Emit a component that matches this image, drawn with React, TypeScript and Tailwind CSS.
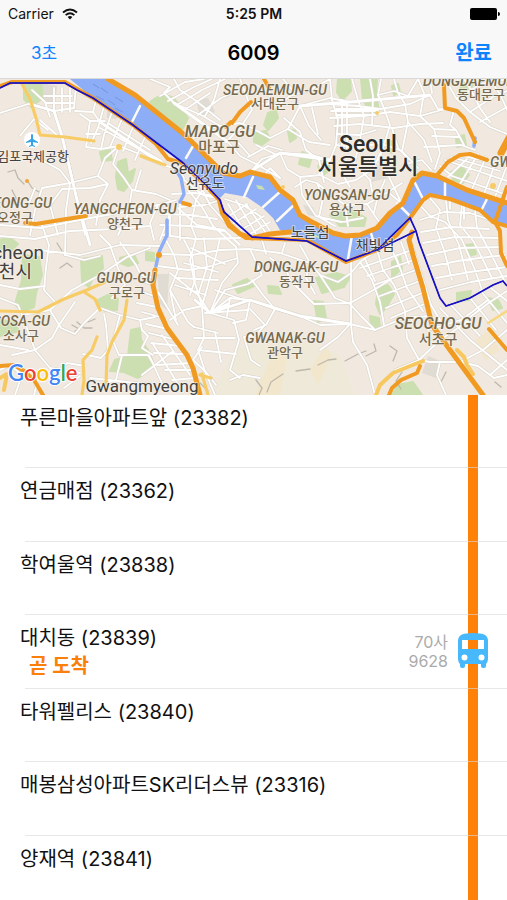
import React from "react";

type Stop = {
  name: string;
  id: string;
  arrival?: string;
  bus?: { left: string; plate: string };
};

const stops: Stop[] = [
  { name: "푸른마을아파트앞", id: "23382" },
  { name: "연금매점", id: "23362" },
  { name: "학여울역", id: "23838" },
  { name: "대치동", id: "23839", arrival: "곧 도착", bus: { left: "70사", plate: "9628" } },
  { name: "타워펠리스", id: "23840" },
  { name: "매봉삼성아파트SK리더스뷰", id: "23316" },
  { name: "양재역", id: "23841" },
];

const parks = [
  "M150 102 Q162 92 174 98 L188 118 L182 130 L160 112Z",
  "M338 79h12l1 12-9 9-5-8Z",
  "M361 79h16l-1 16 3 16-8 2-8-13Z",
  "M268 113l8-3 2 8-10 12-4-5Z",
  "M288 131l7-1 1 8-6 4Z",
  "M254 133l12-2 4 8-8 6-8-3Z",
  "M330 215l22-5 14 8-2 8-24 0Z",
  "M302 152l10 4-3 11-10-3Z",
  "M118 162l8-3 2 14 7-4-3 12-8 10-6-2-2-12Z",
  "M100 152l10-2 2 10-10 1Z",
  "M23 255l16 2 3 18-6 18-2 14-12 5-7-8 7-24Z",
  "M81 259l21-3 1 12-9 8-5 11-7-5Z",
  "M98 300l12-6 8 5-1 11-12 1-7-5Z",
  "M120 258l14-4 4 9-10 3-8-3Z",
  "M146 252l8 1 0 8-8-1Z",
  "M131 330l9-2 1 12 7 10 5 12-6 10-9 6-14-6-14-1 5-11 13-4Z",
  "M316 278l20-5 14 4-6 10-22 6Z",
  "M378 288l10-3 6 9-8 14-6 6-4-10Z",
  "M314 301l9 1 3 16-8 4Z",
  "M370 316l9 2 1 9-9 1Z",
  "M398 385l15-3 9 13h-30Z",
  "M457 293l14-2-2 9-12 1Z",
  "M488 298l10 2 4 8-9 2Z",
  "M451 172l11-5 7 8-6 8-10-3Z",
  "M456 138l8-3 2 10-9 2Z",
  "M0 240l8-4 10 8-7 7-11-3Z",
  "M268 286l10 1 3 7-12-1Z",
  "M24 84l17-2 2 16-12 9-7-8Z",
  "M466 245l8-1 2 10-8 2Z",
  "M392 262l8-5 2 12-10 8Z",
  "M0 320l14 2 5 9-19 5Z",
  "M464 79l9 6-8 12-5-8Z",
  "M318 166l10-4 2 8-8 6Z",
  "M386 143l10-3 3 8-8 5Z",
  "M392 86l6-2 2 8-6 3Z",
  "M233 285l14-6 7 7-16 7Z",
];

const blocks = [
  "M157 274h12l-2 36-7-6Z",
  "M303 205l10 2 4 10-9-2Z",
  "M335 107h8v36h-8Z",
  "M107 103l12 2-2 14-10-1Z",
  "M196 100l12-2 7 14-15 5Z",
  "M372 165l14 1 1 12-15 4Z",
  "M40 83l17 3-2 20-12-5Z",
  "M428 356l14 6-6 16-14-5Z",
];

const streets = [
  // West
  "M0 113L28 104L54 111L74 108L76 86M54 111L62 136L70 168L77 200L85 235M32 90L45 102L50 117M40 120L58 136M20 136L34 119L48 130M44 96H72M46 103H74M54 88V112M62 88V112M70 88V112",
  "M65 83L80 93L96 100L93 112L75 111M93 112L100 122L135 146L160 160L165 165M104 106L98 128L91 143M112 112L104 135L101 149M122 119L110 147M133 127L123 151M145 137L135 160M80 114L90 121L86 147L101 149L119 146L137 153M100 128L154 157M108 123L150 150M90 121H105M86 134H100",
  "M141 156L165 166L178 168L184 178M119 146L113 164L124 178L132 190L128 214L118 235M119 146L105 158L98 176L70 183L42 188L35 210L30 235M42 160L60 170L70 183M98 176L108 184L90 188L62 189L50 205L58 235M108 184L100 200L96 225",
  "M0 225L40 228L60 224L90 218L130 211L158 205L176 200M0 236L35 239L70 231L115 229L150 226M70 183L66 210L65 255M158 205L150 223L154 240M132 190L156 194L170 200M141 170L135 190M35 188L28 206",
  "M40 250L80 255L120 245L160 246M42 225L49 245L46 268L44 290L55 302M65 255L84 260L100 256M100 235L110 245L118 268L125 285L112 298M120 242L136 265L141 275L154 278M0 285L20 289L45 286M0 298L18 305L22 315L50 310L72 290L100 275L127 257L150 248",
  "M22 315L35 350L50 368L80 373M35 350L52 338L59 325L75 302M50 310L61 328L75 334L85 322L100 308M104 314L106 325L108 350L101 358L83 354M100 308L120 315L140 320L155 317M120 315L113 341L119 355L148 355L154 365",
  "M140 320L142 330L148 336L142 348L153 355M137 303L157 307M142 292L157 297M145 282L155 285M142 312L164 318M146 324L168 329M149 333L173 339M151 343L180 346M154 353L183 354M157 365L190 363M165 370L193 370M172 380L196 378M153 344L183 392M162 335L190 375M149 355L165 390M142 375L172 352M90 378L155 385M122 355L116 380L86 390",
  "M0 370L10 365L22 375L15 395M56 375L67 363L85 366M12 355L35 350M40 372L34 395M0 345L28 350M64 388L80 376",
  // Seoul centre, north of the river
  "M150 79L170 87L164 93L174 103L203 116L220 126M174 79L180 90L195 100L220 120M160 96L185 82L204 79M168 101L194 87L212 79M177 105L202 90L225 79M186 109L210 93M198 115L221 98L240 90M220 79L214 100L205 116M190 140L214 127L240 123L252 128",
  "M240 79L246 95L252 110L240 128L226 142M228 142L240 156L258 165L280 178M250 172L262 159L280 153L312 155L330 160M252 128L270 138L288 129L300 106L330 98L350 102M258 103L278 106L290 96L310 90L330 79M262 79L270 93L268 105M283 79L294 92M330 79L332 100L338 120L336 145L330 160L319 174",
  "M352 79L358 100L364 116L360 140L354 165M330 118L364 116L390 112L420 116L445 109M330 104L358 106L380 109L410 104L430 95M331 111H378M334 126L360 124L394 128L420 124M336 145L358 148L380 143L402 151L418 168M337 134L360 135L376 130M381 79L378 95L384 108L390 125L384 145L379 160L388 175L400 200",
  "M342 100V150M347 103V150M336 109H378M336 115H376M378 95L394 91L408 96L418 79M394 79L398 93L405 104L408 122L402 151M418 79L424 93L420 116L434 129L456 130M408 122L424 140L432 162M370 79L373 96L372 125M392 128L398 148L408 159",
  "M284 118L300 132L306 150L319 160L324 182M288 129L309 142L330 145M300 106L309 126L321 140M280 153L287 169L300 177L320 175L338 184L356 180L373 169L384 145M295 187L306 180L317 183L330 194L345 205L367 204L388 192L402 183M317 183L323 198L319 217L335 226M300 177L302 195L316 216L341 222L363 218M345 205L348 226M367 204L375 216L380 223M385 180L378 196L374 212M388 192L400 202",
  "M263 177L270 168L280 178M256 145L275 154M248 157L268 146L282 150M236 140L250 156M312 108L318 134M356 165L370 180L373 196M340 170L350 187M406 164L422 160L431 170",
  // East
  "M430 95L438 109L454 110M430 79L432 93M445 79L456 98L470 112L490 127L507 134M464 79L470 88L480 108L490 122M458 98L481 84L507 79M470 112L493 97L507 91M480 122L507 107M490 79L501 96L507 110M454 110L450 125L456 130L464 145M420 124L443 123M432 136L458 137M434 129L440 153L435 169M424 147L461 145L475 150",
  "M440 166L452 176L507 195M445 160L507 181M451 157L500 171M458 155L504 164M448 177L467 159M460 184L478 154M472 189L486 157M484 194L496 161M495 197L506 168",
  "M419 204L430 216L445 222L462 240L475 270L482 290M430 198L440 210L436 228L444 250L452 280M446 200L448 220L459 245L468 280M462 205L460 225L474 242L492 278M475 210L477 228L490 252L505 282M420 220L444 212L470 213L487 219M421 232L452 227L489 229M423 243L455 237L498 238M427 255L460 248L502 247M432 266L463 260L505 255M436 278L470 272L507 267M440 290L471 282L507 276M450 199V209M464 204V219",
  "M412 245L431 305L440 320M428 330L470 317L490 302L507 291M480 290L507 323M470 298L496 330M440 308L470 340L507 370M450 304L480 336M491 288L507 301M460 321L488 300",
  // Yeouido and the south
  "M225 199L243 205L260 216L270 231M228 204L244 231M236 200L256 234M246 204L266 233M229 216L247 204M234 223L256 209M241 230L264 216M250 234L270 222",
  "M206 185L196 200L191 225L196 238L190 260L194 280L202 306L210 313M220 200L205 205L180 207M178 208L197 225L224 230L240 245M188 190L202 207L213 226L236 247M170 203L170 235M180 200L180 240M200 185L210 205L225 222M184 180L203 195L216 198M160 214L190 215L217 219M160 225L191 226L225 231M163 235L195 239L240 238M172 194L195 193L215 196M171 211L160 240",
  "M160 254L192 255L220 250L250 249L280 253L310 263L320 275M158 266L188 270L207 267L238 258M166 240L174 255L178 270M184 240L192 255L195 280L190 295M204 238L207 267L198 295M220 238L215 260L202 306M236 247L238 263L222 283L210 313M170 273L198 295L210 313M178 270L170 290L176 320M158 292L178 325M170 290L188 322L194 327M202 306L184 310L170 320M178 278L218 280M184 263L218 272M191 248L225 264M175 285L206 295",
  "M210 313L230 298L250 300L275 309L300 316L320 325L350 324L375 330L404 318L430 316M202 306L204 338L198 350L205 371L215 395M210 313L234 320L239 340L230 370L240 378M250 300L246 320L233 323M194 327L218 333M198 350L236 354M252 280L263 295L275 309L266 325L254 330M270 258L286 269L290 280L314 304L350 303L377 288L390 280",
  "M250 249L262 275L248 284L225 290L210 313M262 240L266 254M285 243L282 253M300 245L310 263L306 278L315 294M320 275L338 282L351 273L360 262L377 250M320 275L335 298L350 304L360 315L375 330M351 262V325L353 342L367 365L375 395M350 324L338 337L320 350M360 262L372 280L380 302L384 325M377 250L383 270L394 285L405 311M390 245L400 268L407 288L423 311M401 242L409 264M360 268L412 250M367 276L414 260M374 285L416 270M380 296L420 281M386 308L422 293M391 318L427 303M365 259L375 281M396 257L405 282",
  "M405 311L407 338L419 360L430 362L460 362L483 350L507 330M419 360L440 340L470 320M460 362L478 366L494 378L507 375M395 370L419 360M440 362L437 375L446 395M490 375L507 360M250 309L265 325L256 335L244 337L251 360L260 366M230 380L243 375L260 378",
  "M202 347L193 360L206 372L216 385M205 313L248 310M194 338H235M215 332L221 362M230 298L227 316M215 290L244 300",
];

const thickStreets =
  "M30 104L54 111L62 136L77 200L90 245M100 122L165 166M210 313L250 300L300 316L350 324M250 172L280 153L330 160M174 103L228 142M300 106L350 102L430 95M195 300L210 313L228 304";

const hills =
  "M8 172l7-2 3 8 6 6M27 180l5 8 7 4M12 190l4 8-2 6M57 243l5 8M60 268l7-5 5 4M72 325l7 4-4 2M77 322l7 6 8 0M88 322l7-3M318 365l10-5 8-1M296 371l14-2M345 361l13-7 8-3M366 356l10-5-2-7M390 346l7 5-4 10M402 372l-6 9 5 8M446 372l-5 10M495 382l6 5M283 374l-12 8-4 10M256 380l6 8-3 7M200 383l8 8";

const river =
  "M70 79L108 79L135 95L180 131L205 155L223 173L240 176L250 172L270 177L280 190L293 200L300 215L310 222L333 233L360 235L377 228L390 213L403 203L413 180L422 173L437 176L467 190L507 203L507 226L493 222L480 210L450 199L430 195L423 202L410 218L390 240L377 250L346 262L307 242L290 234L280 230L273 218L263 208L247 197L225 193L220 198L203 182L182 162L133 125L93 98Z";

const route =
  "M0 88L10 83L65 83L77 90L93 98L133 125L182 162L203 182L220 200L224 212L252 237L307 241L346 261L377 250L416 231M377 250L410 218L416 231L419 242L440 298L446 306L470 298L493 285L503 281L507 286";

type Label = {
  x: number;
  y: number;
  text: string;
  size: number;
  kind: "gu" | "ko" | "town";
  anchor?: "start" | "end";
};

const labels: Label[] = [
  { x: 275, y: 95, text: "SEODAEMUN-GU", size: 14, kind: "gu" },
  { x: 275, y: 108, text: "서대문구", size: 13, kind: "ko" },
  { x: 423, y: 86, text: "DONGDAEMUN-GU", size: 14, kind: "gu", anchor: "start" },
  { x: 481, y: 99, text: "동대문구", size: 13, kind: "ko" },
  { x: 220, y: 137, text: "MAPO-GU", size: 16, kind: "gu" },
  { x: 219, y: 152, text: "마포구", size: 15, kind: "ko" },
  { x: 490, y: 167, text: "GWANGJIN-GU", size: 14, kind: "gu", anchor: "start" },
  { x: 125, y: 214, text: "YANGCHEON-GU", size: 14, kind: "gu" },
  { x: 125, y: 228, text: "양천구", size: 13, kind: "ko" },
  { x: 347, y: 200, text: "YONGSAN-GU", size: 14, kind: "gu" },
  { x: 347, y: 214, text: "용산구", size: 13, kind: "ko" },
  { x: 52, y: 208, text: "OJEONG-GU", size: 14, kind: "gu", anchor: "end" },
  { x: 33, y: 222, text: "오정구", size: 13, kind: "ko", anchor: "end" },
  { x: 126, y: 283, text: "GURO-GU", size: 14, kind: "gu" },
  { x: 127, y: 297, text: "구로구", size: 13, kind: "ko" },
  { x: 296, y: 272, text: "DONGJAK-GU", size: 14, kind: "gu" },
  { x: 297, y: 286, text: "동작구", size: 13, kind: "ko" },
  { x: 50, y: 326, text: "SOSA-GU", size: 14, kind: "gu", anchor: "end" },
  { x: 21, y: 340, text: "소사구", size: 13, kind: "ko" },
  { x: 285, y: 343, text: "GWANAK-GU", size: 14, kind: "gu" },
  { x: 285, y: 357, text: "관악구", size: 13, kind: "ko" },
  { x: 438, y: 329, text: "SEOCHO-GU", size: 16, kind: "gu" },
  { x: 438, y: 344, text: "서초구", size: 14, kind: "ko" },
  { x: 69, y: 161, text: "김포국제공항", size: 13, kind: "town", anchor: "end" },
  { x: 205, y: 188, text: "선유도", size: 14, kind: "town" },
  { x: 310, y: 237, text: "노들섬", size: 14, kind: "town" },
  { x: 375, y: 250, text: "채빛섬", size: 14, kind: "town" },
  { x: 142, y: 392, text: "Gwangmyeong", size: 17, kind: "town" },
  { x: 44, y: 259, text: "Bucheon", size: 19, kind: "town", anchor: "end" },
  { x: 32, y: 278, text: "부천시", size: 18, kind: "town", anchor: "end" },
];

const labelClass = {
  gu: "fill-[#756a4f] font-medium italic",
  ko: "fill-[#756a4f] font-medium",
  town: "fill-[#40403e]",
};

function MapView() {
  return (
    <svg
      viewBox="0 79 507 316"
      preserveAspectRatio="xMidYMid slice"
      className="block h-[316px] w-full shrink-0 bg-[#f1ebe1] font-[Roboto,'Noto_Sans_CJK_KR',sans-serif]"
      role="img"
      aria-label="서울 지도"
    >
      <rect y="79" width="507" height="316" fill="#f1e9df" />
      <path d="M210 395L235 350L290 335L340 355L355 395Z" fill="#eee9d8" />
      <path d="M255 395L270 360L290 345L280 395ZM310 370L325 346L332 355L318 385ZM475 340L490 330L500 350L485 360Z" fill="#f2e7cc" />
      {blocks.map((d) => <path key={d} d={d} fill="#e0dbd3" />)}
      {parks.map((d) => <path key={d} d={d} fill="#cbdfb0" strokeLinejoin="round" stroke="#cbdfb0" strokeWidth="2" />)}

      <g fill="none" strokeLinejoin="round" strokeLinecap="round">
        <path d={hills} stroke="#bdb8ad" strokeWidth="1.3" />
        {streets.map((d) => <path key={d} d={d} stroke="#dbd6cd" strokeWidth="3" />)}
        <path d={thickStreets} stroke="#dbd6cd" strokeWidth="4" />
        {streets.map((d) => <path key={d} d={d} stroke="#ffffff" strokeWidth="1.8" />)}
        <path d={thickStreets} stroke="#ffffff" strokeWidth="2.8" />
      </g>

      <path d={river} fill="#8dadf7" />
      <path d="M256 185l6 1 3 4-7-1ZM300 229l12 4 10 5-12-1Z" fill="#c9dfaf" />
      <path d="M93 84l6 4M101 88l7 5M96 96l8 4M108 100l7 5M115 108l8 4M115 97l8 5" stroke="#7595dc" strokeWidth="1" />
      <g fill="none" strokeLinecap="round" strokeLinejoin="round">
        <path d="M167 235L159 252L156 266M176 170L181 178L184 194L180 202M167 220V236M474 146L475 138" stroke="#8dadf7" strokeWidth="3.5" />
        <path d="M132 122L140 106M186 158L193 146M244 197L253 177M263 207L282 190M277 221L295 204M348 259L352 235M375 247L371 233M409 215L397 203M423 199L415 183M445 196L445 181M482 209L488 197" stroke="#fbfaf5" strokeWidth="2.5" />
        <path d="M22 84L30 99L36 118L40 135L65 137L94 141M141 156L165 165M0 311L38 312L64 299L87 290L105 282M84 292L95 299L100 310M127 300L124 320L112 342L107 355L106 385M97 337L92 350L83 360L84 380L82 395M202 374L208 395M200 375L211 378" stroke="#f7cc66" strokeWidth="3.2" />
        <path d="M376 395L380 385L393 373L410 366L423 361M457 350L464 357L467 365L473 374M0 378L7 374L4 390" stroke="#f6c85f" strokeWidth="4" />
        <path d="M507 311L488 323" stroke="#f7d77f" strokeWidth="2.5" />
        <path d="M25 223L36 224L60 220L86 216" stroke="#ef9b24" strokeWidth="4" />
        <path d="M108 79L135 95L180 131L190 140L205 155L223 173L240 176L250 172L270 177L280 190L293 200L300 215L310 221L333 233L345 236L360 235L377 228L390 213L403 203L413 180L422 173L437 176L467 190L507 203" stroke="#f09a22" strokeWidth="5" />
        <path d="M0 86L12 82L65 82L93 98L133 125L156 144L168 159L182 163L203 183L219 200L222 213L229 226L246 238L307 240L346 262L377 250L397 235L410 218L423 200L430 195L450 199L480 210L493 222L507 226" stroke="#f09a22" strokeWidth="4" />
        <path d="M222 210L229 224L240 234L252 238L270 234L290 232" stroke="#f09a22" strokeWidth="5" />
        <path d="M412 232L409 240L413 255L423 288L432 325L450 350L483 395M155 270L153 285L158 308L167 328L187 355L193 368L200 395" stroke="#f09a22" strokeWidth="5" />
        <path d="M444 85L445 108L457 111L464 118L475 142M437 175L448 162L460 155L470 154L487 160M507 187L495 222L500 231L501 253L507 266M232 123L240 112L251 102M264 79L269 88M231 122L226 127M489 329L507 350M420 366L417 373L401 380L392 388L389 395M0 366L14 365L24 371L34 380L43 395M183 203L190 205" stroke="#f09a22" strokeWidth="4" />
        <path d="M509 138L501 153" stroke="#f09a22" strokeWidth="7" />
      </g>
      <path d={route} fill="none" stroke="#1811c4" strokeWidth="1.7" />
      <circle cx="119" cy="147" r="3" fill="#f7cc66" />
      <circle cx="27" cy="181" r="2" fill="#f0a63a" />
      <circle cx="159" cy="255" r="3" fill="#f09a22" />
      <circle cx="283" cy="187" r="2" fill="#f7cc66" />
      <circle cx="377" cy="113" r="2" fill="#f7cc66" />
      <circle cx="493" cy="186" r="3" fill="#f7cc66" />

      <circle cx="32" cy="140" r="8" fill="#ffffff" />
      <path d="M31 135q1-2 2 0v4l5 3v1l-5-1v3l2 1v1l-3-1-3 1v-1l2-1v-3l-5 1v-1l5-3Z" fill="#35a4e4" />

      <g textAnchor="middle" strokeLinejoin="round" className="stroke-[#f8f4eb]/60" style={{ paintOrder: "stroke" }} strokeWidth="2">
        {labels.map((l) => (
          <text key={l.text} x={l.x} y={l.y} fontSize={l.size} textAnchor={l.anchor ?? "middle"} className={labelClass[l.kind]}>
            {l.text}
          </text>
        ))}
        <text x="204" y="174" fontSize="16" className="fill-[#40403e] italic">Seonyudo</text>
        <text x="368" y="152" fontSize="23" className="fill-[#2d2d2b] font-medium">Seoul</text>
        <text x="368" y="174" fontSize="22" className="fill-[#2d2d2b] font-medium">서울특별시</text>
      </g>
      <path d={route} fill="none" stroke="#1811c4" strokeWidth="1" />

      <text x="8" y="381" fontSize="22" className="stroke-white font-[Lato,sans-serif] font-semibold" strokeWidth="2" style={{ paintOrder: "stroke" }}>
        <tspan fill="#4285f4">G</tspan>
        <tspan fill="#ea4335">o</tspan>
        <tspan fill="#fbbc05">o</tspan>
        <tspan fill="#4285f4">g</tspan>
        <tspan fill="#34a853">l</tspan>
        <tspan fill="#ea4335">e</tspan>
      </text>
    </svg>
  );
}

function WifiIcon() {
  return (
    <svg viewBox="0 0 16 12" className="h-3 w-4" fill="none" stroke="#111" aria-hidden="true">
      <path d="M1 4.5Q8-1.6 15 4.5" strokeWidth="1.9" />
      <path d="M3.6 7.2Q8 3.3 12.4 7.2" strokeWidth="1.8" />
      <path d="M8 11.5L5.6 9Q8 7 10.4 9Z" fill="#111" stroke="none" />
    </svg>
  );
}

function BatteryIcon() {
  return (
    <svg viewBox="0 0 30 12" className="h-3 w-[30px]" aria-hidden="true">
      <rect width="27" height="12" rx="2" fill="#000" />
      <path d="M28 4Q30 4 30 6T28 8Z" fill="#000" />
    </svg>
  );
}

function BusIcon() {
  return (
    <svg viewBox="0 0 30 35" className="h-[35px] w-[30px]" fill="#46b8fb" aria-hidden="true">
      <path
        fillRule="evenodd"
        d="M0 8Q0 3 4 1.500Q8 0 15 0T26 1.500Q30 3 30 8V26Q30 29 28 31V33Q28 35 26 35H25Q23 35 23 33V31H7V33Q7 35 5 35H4Q2 35 2 33V31Q0 29 0 26ZM4 7V16H26V7ZM6.500 21.500a3 3 0 1 0 0 6a3 3 0 1 0 0-6ZM23.500 21.500a3 3 0 1 0 0 6a3 3 0 1 0 0-6Z"
      />
    </svg>
  );
}

function StopRow({ stop }: { stop: Stop }) {
  return (
    <li className="relative flex pl-5 pr-[29px]">
      <div className="min-w-0 flex-1 pt-[9px]">
        <p className="text-[20px] leading-7">{stop.name} ({stop.id})</p>
        {stop.arrival && <p className="pl-[9px] text-[20px] font-bold leading-7 text-[#fb800b]">{stop.arrival}</p>}
      </div>
      {stop.bus && (
        <div className="mr-5 pt-[18px] text-right text-base leading-[19px] text-[#ababab]">
          <p>{stop.bus.left}</p>
          <p>{stop.bus.plate}</p>
        </div>
      )}
      <div className="flex w-[10px] justify-center bg-[#ff8108]">
        {stop.bus && <div className="absolute top-[18px]"><BusIcon /></div>}
      </div>
      <div className="absolute bottom-0 left-[25px] right-0 h-px bg-[#d8d8dc]/60" />
    </li>
  );
}

export default function App() {
  return (
    <div className="flex h-screen flex-col overflow-hidden bg-white font-[Inter,'Noto_Sans_CJK_KR',sans-serif] text-[#111]">
      <header className="shrink-0 border-b border-[#d9d9d9] bg-[#f8f8f8]">
        <div className="grid h-7 grid-cols-3 items-center pl-2 pr-[7px] text-[14px] leading-5">
          <div className="flex items-center gap-2">
            <span>Carrier</span>
            <WifiIcon />
          </div>
          <span className="text-center text-[14px] font-semibold">5:25 PM</span>
          <div className="flex justify-end"><BatteryIcon /></div>
        </div>
        <nav className="grid h-[50px] grid-cols-3 items-center pl-[31px] pr-[15px] text-[#0f83fe]">
          <button type="button" className="justify-self-start text-[17px] leading-6">3초</button>
          <h1 className="pr-4 text-center text-[20px] font-semibold leading-6 text-black">6009</h1>
          <button type="button" className="justify-self-end text-[20px] font-bold leading-6">완료</button>
        </nav>
      </header>
      <MapView />
      <ul className="grid h-[514px] shrink-0 grid-rows-7">
        {stops.map((s) => <StopRow key={s.id} stop={s} />)}
      </ul>
    </div>
  );
}
